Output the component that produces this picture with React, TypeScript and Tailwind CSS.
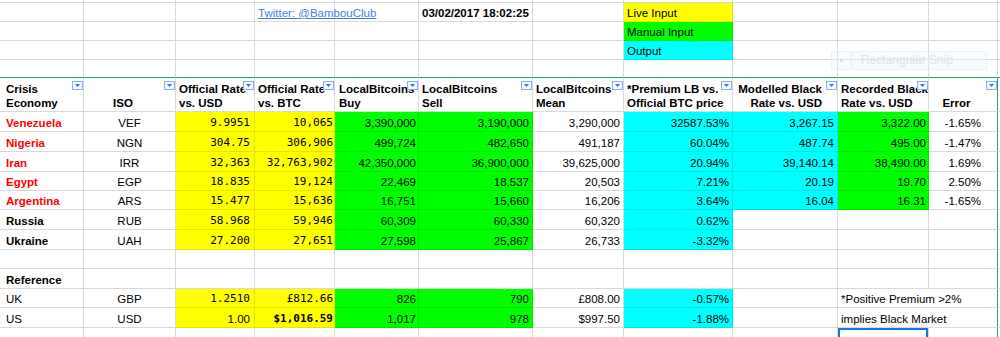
import React from 'react';

// column widths (incl. right gridline)
const W = ['w-[84px]', 'w-[92px]', 'w-[79px]', 'w-[80px]', 'w-[84px]', 'w-[114px]', 'w-[91px]', 'w-[109px]', 'w-[105px]', 'w-[91px]', 'w-[69px]', 'w-[40px]'];
// right padding for right-aligned numbers
const PR = ['', '', 'pr-[4px]', 'pr-[1px]', 'pr-[2px]', 'pr-[3px]', 'pr-[3px]', 'pr-[3px]', 'pr-[3px]', 'pr-[2px]', 'pr-[16px]', ''];

const Y = 'bg-[#ffff00]';
const G = 'bg-[#00ff00]';
const C = 'bg-[#00ffff]';
const MONO = "font-['DejaVu_Sans_Mono',monospace] text-[11px]";
const GREEN_LINE = 'border-r-[#1ea362]';

type CellProps = { i: number; bg?: string; cls?: string; children?: React.ReactNode; edge?: boolean };

function Cell({ i, bg, cls = '', children, edge }: CellProps) {
  const line = bg ? 'border-black/10' : 'border-[#d9d9d9]';
  return (
    <div
      className={`${W[i]} ${bg ?? ''} ${line} ${edge && i === 10 ? GREEN_LINE : ''} relative flex h-full shrink-0 items-end whitespace-nowrap border-r border-b pb-[1px] leading-[14px] ${cls}`}
    >
      {children}
    </div>
  );
}

function FilterIcon() {
  return (
    <div className="absolute right-0 top-[3px] flex h-[9px] w-[11px] items-center justify-center border border-[#8ab0f2] bg-[#f4f8ff]">
      <svg width="5" height="3" viewBox="0 0 5 3">
        <path d="M0 0h5L2.5 3z" fill="#3f6fd8" />
      </svg>
    </div>
  );
}

type Row = {
  h: string;
  name: string;
  red?: boolean;
  bold?: boolean;
  iso?: string;
  v?: string[];
};

const rows: Row[] = [
  { h: 'h-[20px]', name: 'Venezuela', red: true, iso: 'VEF', v: ['9.9951', '10,065', '3,390,000', '3,190,000', '3,290,000', '32587.53%', '3,267.15', '3,322.00', '-1.65%'] },
  { h: 'h-[20px]', name: 'Nigeria', red: true, iso: 'NGN', v: ['304.75', '306,906', '499,724', '482,650', '491,187', '60.04%', '487.74', '495.00', '-1.47%'] },
  { h: 'h-[20px]', name: 'Iran', red: true, iso: 'IRR', v: ['32,363', '32,763,902', '42,350,000', '36,900,000', '39,625,000', '20.94%', '39,140.14', '38,490.00', '1.69%'] },
  { h: 'h-[19px]', name: 'Egypt', red: true, iso: 'EGP', v: ['18.835', '19,124', '22,469', '18,537', '20,503', '7.21%', '20.19', '19.70', '2.50%'] },
  { h: 'h-[19px]', name: 'Argentina', red: true, iso: 'ARS', v: ['15.477', '15,636', '16,751', '15,660', '16,206', '3.64%', '16.04', '16.31', '-1.65%'] },
  { h: 'h-[20px]', name: 'Russia', bold: true, iso: 'RUB', v: ['58.968', '59,946', '60,309', '60,330', '60,320', '0.62%'] },
  { h: 'h-[20px]', name: 'Ukraine', bold: true, iso: 'UAH', v: ['27.200', '27,651', '27,598', '25,867', '26,733', '-3.32%'] },
];

function DataRow({ r }: { r: Row }) {
  const v = r.v ?? [];
  const bgFor = (i: number) => {
    if (!v.length) return undefined;
    if (i === 2 || i === 3) return Y;
    if (i === 4 || i === 5) return G;
    if (i === 7) return C;
    if (i === 8 && v.length > 6) return C;
    if (i === 9 && v.length > 7) return G;
    return undefined;
  };
  return (
    <div className={`flex ${r.h}`}>
      <Cell i={0} cls={`pl-[6px] ${r.red ? 'font-bold text-[#ff0000]' : r.bold ? 'font-bold' : ''}`}>{r.name}</Cell>
      <Cell i={1} cls="justify-center">{r.iso}</Cell>
      {[2, 3, 4, 5, 6, 7, 8, 9, 10].map((i) => (
        <Cell key={i} i={i} bg={bgFor(i)} edge cls={`justify-end ${PR[i]} ${i < 4 ? MONO : ''}`}>
          {v[i - 2]}
        </Cell>
      ))}
      <Cell i={11} />
    </div>
  );
}

function EmptyRow({ h, edge, bottom }: { h: string; edge?: boolean; bottom?: string }) {
  return (
    <div className={`flex ${h}`}>
      {W.map((_, i) => (
        <Cell key={i} i={i} edge={edge} cls={bottom ?? ''} />
      ))}
    </div>
  );
}

export default function App() {
  const head: { i: number; l1?: string; l2: string; cls: string }[] = [
    { i: 0, l1: 'Crisis', l2: 'Economy', cls: 'pl-[6px]' },
    { i: 1, l2: 'ISO', cls: 'items-center pr-[13px]' },
    { i: 2, l1: 'Official Rate', l2: 'vs. USD', cls: 'pl-[3px]' },
    { i: 3, l1: 'Official Rate', l2: 'vs. BTC', cls: 'pl-[3px]' },
    { i: 4, l1: 'LocalBitcoins', l2: 'Buy', cls: 'pl-[4px]' },
    { i: 5, l1: 'LocalBitcoins', l2: 'Sell', cls: 'pl-[3px]' },
    { i: 6, l1: 'LocalBitcoins', l2: 'Mean', cls: 'pl-[3px]' },
    { i: 7, l1: '*Premium LB vs.', l2: 'Official BTC price', cls: 'pl-[3px]' },
    { i: 8, l1: 'Modelled Black', l2: 'Rate vs. USD', cls: 'items-end pr-[15px]' },
    { i: 9, l1: 'Recorded Black', l2: 'Rate vs. USD', cls: 'pl-[3px]' },
    { i: 10, l2: 'Error', cls: 'items-center pr-[13px]' },
  ];

  return (
    <div className="relative h-[337px] w-[1000px] overflow-hidden bg-white font-['Liberation_Sans',Arial,sans-serif] text-[11.5px] text-black">
      {/* top info rows */}
      <EmptyRow h="h-[3px]" />
      <div className="flex h-[19px]">
        <Cell i={0} />
        <Cell i={1} />
        <Cell i={2} />
        <Cell i={3} cls="z-10 overflow-visible pl-[3px]">
          <span className="text-[#4a7fe0] underline">Twitter: @BambouClub</span>
        </Cell>
        <Cell i={4} />
        <Cell i={5} cls="pl-[3px] font-bold">03/02/2017 18:02:25</Cell>
        <Cell i={6} />
        <Cell i={7} bg={Y} cls="pl-[3px]">Live Input</Cell>
        <Cell i={8} />
        <Cell i={9} />
        <Cell i={10} />
        <Cell i={11} />
      </div>
      <div className="flex h-[19px]">
        {W.map((_, i) =>
          i === 7 ? (
            <Cell key={i} i={i} bg={G} cls="pl-[3px]">Manual Input</Cell>
          ) : (
            <Cell key={i} i={i} />
          )
        )}
      </div>
      <div className="flex h-[19px]">
        {W.map((_, i) =>
          i === 7 ? (
            <Cell key={i} i={i} bg={C} cls="pl-[3px]">Output</Cell>
          ) : (
            <Cell key={i} i={i} />
          )
        )}
      </div>
      <EmptyRow h="h-[18px]" bottom="border-b-[#1ea362]" />

      {/* header */}
      <div className="flex h-[34px]">
        {head.map((c) => (
          <Cell key={c.i} i={c.i} edge cls="overflow-hidden">
            <div className={`flex w-full flex-col font-bold ${c.cls}`}>
              {c.l1 && <span>{c.l1}</span>}
              <span>{c.l2}</span>
            </div>
            <FilterIcon />
          </Cell>
        ))}
        <Cell i={11} />
      </div>

      {rows.map((r) => (
        <DataRow key={r.name} r={r} />
      ))}

      <EmptyRow h="h-[19px]" edge />

      <div className="flex h-[20px]">
        <Cell i={0} cls="pl-[6px] font-bold">Reference</Cell>
        {W.slice(1).map((_, k) => (
          <Cell key={k} i={k + 1} edge />
        ))}
      </div>

      {/* UK */}
      <div className="flex h-[19px]">
        <Cell i={0} cls="pl-[6px]">UK</Cell>
        <Cell i={1} cls="justify-center">GBP</Cell>
        <Cell i={2} bg={Y} cls={`justify-end ${PR[2]} ${MONO}`}>1.2510</Cell>
        <Cell i={3} bg={Y} cls={`justify-end ${PR[3]} ${MONO}`}>£812.66</Cell>
        <Cell i={4} bg={G} cls={`justify-end ${PR[4]}`}>826</Cell>
        <Cell i={5} bg={G} cls={`justify-end ${PR[5]}`}>790</Cell>
        <Cell i={6} cls={`justify-end ${PR[6]}`}>£808.00</Cell>
        <Cell i={7} bg={C} cls={`justify-end ${PR[7]}`}>-0.57%</Cell>
        <Cell i={8} />
        <Cell i={9} cls="z-10 overflow-visible border-r-transparent pl-[3px]">*Positive Premium &gt;2%</Cell>
        <Cell i={10} edge />
        <Cell i={11} />
      </div>

      {/* US */}
      <div className="flex h-[20px]">
        <Cell i={0} cls="pl-[6px]">US</Cell>
        <Cell i={1} cls="justify-center">USD</Cell>
        <Cell i={2} bg={Y} cls={`justify-end ${PR[2]}`}>1.00</Cell>
        <Cell i={3} bg={Y} cls={`justify-end ${PR[3]} ${MONO} font-bold`}>$1,016.59</Cell>
        <Cell i={4} bg={G} cls={`justify-end ${PR[4]}`}>1,017</Cell>
        <Cell i={5} bg={G} cls={`justify-end ${PR[5]}`}>978</Cell>
        <Cell i={6} cls={`justify-end ${PR[6]}`}>$997.50</Cell>
        <Cell i={7} bg={C} cls={`justify-end ${PR[7]}`}>-1.88%</Cell>
        <Cell i={8} />
        <Cell i={9} cls="z-10 overflow-visible border-r-transparent pl-[3px]">implies Black Market</Cell>
        <Cell i={10} edge />
        <Cell i={11} />
      </div>

      {/* partial last row with the selected cell */}
      <div className="flex h-[12px]">
        {W.map((_, i) =>
          i === 9 ? (
            <Cell key={i} i={i} cls="shadow-[inset_0_0_0_2px_#1a73e8]" />
          ) : (
            <Cell key={i} i={i} edge />
          )
        )}
      </div>

      {/* faded snipping-tool overlay */}
      <div className="absolute left-[831px] top-[51px] flex h-[19px] w-[156px] border border-[#e3ecf8]/70 bg-[#eaf2fc]/40">
        <div className="flex w-[20px] items-center justify-center border-r border-[#e3ecf8]">
          <div className="h-[3px] w-[3px] rounded-full bg-[#d8d8d8]" />
        </div>
        <span className="pl-[9px] text-[12px] leading-[17px] text-[#e2e2e2]">Rectangular Snip</span>
      </div>
    </div>
  );
}
